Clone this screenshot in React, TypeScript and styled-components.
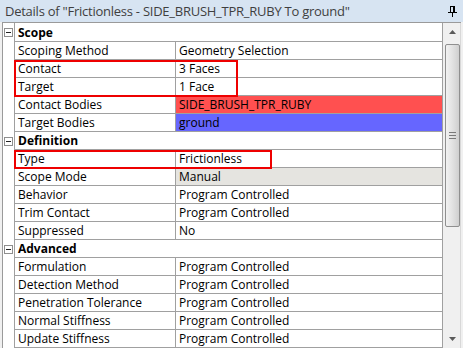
import React, { FC } from 'react';
import styled, { createGlobalStyle } from 'styled-components';

const GlobalStyle = createGlobalStyle`
    html, body {
        margin: 0;
        padding: 0;
        background: #f0f0f0;
    }
    * {
        box-sizing: border-box;
    }
`;

const WindowStyled = styled.div`
    position: relative;
    width: 463px;
    height: 348px;
    overflow: hidden;
    background: #f0f0f0;
    font-family: "Open Sans", "Noto Sans", sans-serif;
    font-size: 12px;
    color: #000;
`;

const TitleBarStyled = styled.div`
    display: flex;
    align-items: center;
    justify-content: space-between;
    height: 22px;
    padding: 0 6px 0 5px;
    background: #d7e4f2;
    color: #3f3f3f;
    font-size: 13px;
    letter-spacing: -0.25px;
    white-space: nowrap;
`;

const PanelStyled = styled.div`
    display: flex;
    height: 326px;
    margin-left: 2px;
    margin-right: 2px;
    border-top: 1px solid #9a9a9a;
    border-left: 1px solid #9a9a9a;
    background: #fff;
`;

const GridStyled = styled.div`
    flex: 1;
    display: flex;
    flex-direction: column;
    border-right: 1px solid #a0a0a0;
`;

const RowStyled = styled.div<{ $first?: boolean }>`
    display: flex;
    height: ${(p) => (p.$first ? 19 : 18)}px;
    flex-shrink: 0;
`;

const GutterStyled = styled.div`
    width: 12px;
    flex-shrink: 0;
    display: flex;
    align-items: center;
    padding-left: 1px;
    border-right: 1px solid #a0a0a0;
    background: #fff;
`;

const ExpanderStyled = styled.div`
    position: relative;
    width: 9px;
    height: 9px;
    border: 1px solid #8e8e8e;
    background: #fff;
    &::after {
        content: '';
        position: absolute;
        left: 1px;
        top: 3px;
        width: 5px;
        height: 1px;
        background: #222;
    }
`;

const HeaderCellStyled = styled.div`
    flex: 1;
    display: flex;
    align-items: center;
    padding-left: 3px;
    font-weight: bold;
    border-bottom: 1px solid #a0a0a0;
`;

const NameCellStyled = styled.div`
    width: 161px;
    flex-shrink: 0;
    display: flex;
    align-items: center;
    padding-left: 3px;
    border-right: 1px solid #a0a0a0;
    border-bottom: 1px solid #a0a0a0;
    white-space: nowrap;
`;

const ValueCellStyled = styled.div<{ $bg?: string }>`
    flex: 1;
    display: flex;
    align-items: center;
    padding-left: 3px;
    background: ${(p) => p.$bg || '#fff'};
    border-bottom: 1px solid #a0a0a0;
    white-space: nowrap;
`;

const ScrollbarStyled = styled.div`
    width: 18px;
    flex-shrink: 0;
    display: flex;
    flex-direction: column;
    align-items: center;
    padding-left: 1px;
    background: #f0f0f0;
    border-right: 1px solid #d8d8d8;
`;

const ScrollArrowStyled = styled.div`
    height: 18px;
    flex-shrink: 0;
    display: flex;
    align-items: center;
    justify-content: center;
`;

const ScrollThumbStyled = styled.div`
    margin-top: 3px;
    width: 15px;
    height: 183px;
    flex-shrink: 0;
    border: 1px solid #8f8f8f;
    border-radius: 2px;
    background: linear-gradient(to right, #f2f2f2, #e0e0e0 55%, #cfcfcf);
    display: flex;
    align-items: center;
    justify-content: center;
`;

const ScrollTrackStyled = styled.div`
    flex: 1;
`;

const HighlightStyled = styled.div<{ $left: number; $top: number; $width: number; $height: number }>`
    position: absolute;
    left: ${(p) => p.$left}px;
    top: ${(p) => p.$top}px;
    width: ${(p) => p.$width}px;
    height: ${(p) => p.$height}px;
    border: 2px solid #ee0000;
    pointer-events: none;
`;

interface Property {
    name: string;
    value: string;
    bg?: string;
}

interface Section {
    title: string;
    rows: Property[];
}

const sections: Section[] = [
    {
        title: 'Scope',
        rows: [
            { name: 'Scoping Method', value: 'Geometry Selection' },
            { name: 'Contact', value: '3 Faces' },
            { name: 'Target', value: '1 Face' },
            { name: 'Contact Bodies', value: 'SIDE_BRUSH_TPR_RUBY', bg: '#ff5050' },
            { name: 'Target Bodies', value: 'ground', bg: '#6666ff' },
        ],
    },
    {
        title: 'Definition',
        rows: [
            { name: 'Type', value: 'Frictionless' },
            { name: 'Scope Mode', value: 'Manual', bg: '#e5e4e0' },
            { name: 'Behavior', value: 'Program Controlled' },
            { name: 'Trim Contact', value: 'Program Controlled' },
            { name: 'Suppressed', value: 'No' },
        ],
    },
    {
        title: 'Advanced',
        rows: [
            { name: 'Formulation', value: 'Program Controlled' },
            { name: 'Detection Method', value: 'Program Controlled' },
            { name: 'Penetration Tolerance', value: 'Program Controlled' },
            { name: 'Normal Stiffness', value: 'Program Controlled' },
            { name: 'Update Stiffness', value: 'Program Controlled' },
        ],
    },
];

const PinIcon: FC = () => (
    <svg width="9" height="11" viewBox="0 0 9 11">
        <rect x="2" y="0" width="5" height="1" fill="#000" />
        <rect x="2" y="0" width="1" height="6" fill="#000" />
        <rect x="5" y="0" width="2" height="6" fill="#000" />
        <rect x="0" y="6" width="9" height="1" fill="#000" />
        <rect x="4" y="7" width="1" height="4" fill="#000" />
    </svg>
);

const Arrow: FC<{ down?: boolean }> = ({ down }) => (
    <svg width="7" height="4" viewBox="0 0 7 4">
        <polygon points={down ? '0,0 7,0 3.5,4' : '0,4 7,4 3.5,0'} fill="#5a5a5a" />
    </svg>
);

const Grip: FC = () => (
    <svg width="7" height="7" viewBox="0 0 7 7">
        <rect x="0" y="0" width="7" height="1" fill="#7a7a7a" />
        <rect x="0" y="3" width="7" height="1" fill="#7a7a7a" />
        <rect x="0" y="6" width="7" height="1" fill="#7a7a7a" />
    </svg>
);

export default function App() {
    return (
        <WindowStyled>
            <GlobalStyle />
            <TitleBarStyled>
                <span>Details of "Frictionless - SIDE_BRUSH_TPR_RUBY To ground"</span>
                <PinIcon />
            </TitleBarStyled>

            <PanelStyled>
                <GridStyled>
                    {sections.map((section, index) => (
                        <React.Fragment key={section.title}>
                            <RowStyled $first={index === 0}>
                                <GutterStyled>
                                    <ExpanderStyled />
                                </GutterStyled>
                                <HeaderCellStyled>{section.title}</HeaderCellStyled>
                            </RowStyled>
                            {section.rows.map((row) => (
                                <RowStyled key={row.name}>
                                    <GutterStyled />
                                    <NameCellStyled>{row.name}</NameCellStyled>
                                    <ValueCellStyled $bg={row.bg}>{row.value}</ValueCellStyled>
                                </RowStyled>
                            ))}
                        </React.Fragment>
                    ))}
                </GridStyled>

                <ScrollbarStyled>
                    <ScrollArrowStyled>
                        <Arrow />
                    </ScrollArrowStyled>
                    <ScrollThumbStyled>
                        <Grip />
                    </ScrollThumbStyled>
                    <ScrollTrackStyled />
                    <ScrollArrowStyled>
                        <Arrow down />
                    </ScrollArrowStyled>
                </ScrollbarStyled>
            </PanelStyled>

            <HighlightStyled $left={14} $top={60} $width={224} $height={37} />
            <HighlightStyled $left={14} $top={150} $width={258} $height={19} />
        </WindowStyled>
    );
}
